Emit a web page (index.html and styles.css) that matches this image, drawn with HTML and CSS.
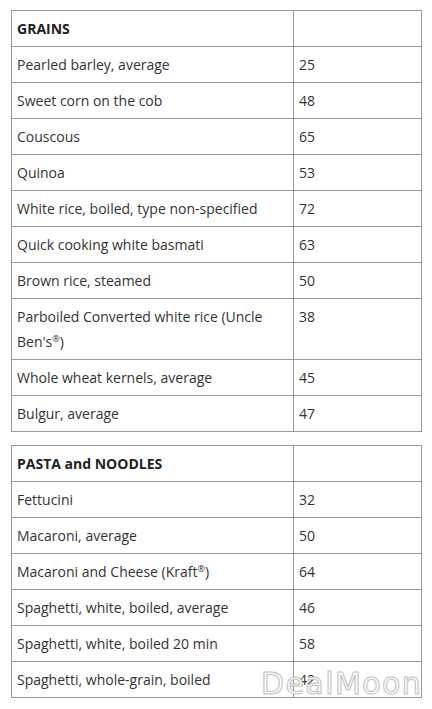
FILE: index.html
```html
<!DOCTYPE html>
<html lang="en">
<head>
    <meta charset="UTF-8">
    <meta name="viewport" content="width=device-width, initial-scale=1.0">
    <title>Glycemic Index - Grains and Pasta</title>
    <link rel="stylesheet" href="styles.css">
</head>
<body>
    <div class="page">
        <table class="gi-table">
            <tr><th>GRAINS</th><td></td></tr>
            <tr><td>Pearled barley, average</td><td>25</td></tr>
            <tr><td>Sweet corn on the cob</td><td>48</td></tr>
            <tr><td>Couscous</td><td>65</td></tr>
            <tr><td>Quinoa</td><td>53</td></tr>
            <tr><td>White rice, boiled, type non-specified</td><td>72</td></tr>
            <tr><td>Quick cooking white basmati</td><td>63</td></tr>
            <tr><td>Brown rice, steamed</td><td>50</td></tr>
            <tr><td>Parboiled Converted white rice (Uncle Ben's<sup>®</sup>)</td><td>38</td></tr>
            <tr><td>Whole wheat kernels, average</td><td>45</td></tr>
            <tr><td>Bulgur, average</td><td>47</td></tr>
        </table>

        <table class="gi-table">
            <tr><th>PASTA and NOODLES</th><td></td></tr>
            <tr><td>Fettucini</td><td>32</td></tr>
            <tr><td>Macaroni, average</td><td>50</td></tr>
            <tr><td>Macaroni and Cheese (Kraft<sup>®</sup>)</td><td>64</td></tr>
            <tr><td>Spaghetti, white, boiled, average</td><td>46</td></tr>
            <tr><td>Spaghetti, white, boiled 20 min</td><td>58</td></tr>
            <tr><td>Spaghetti, whole-grain, boiled</td><td>42</td></tr>
        </table>

        <div class="watermark">DealMoon</div>
    </div>
</body>
</html>
```

FILE: styles.css
```css
* { margin: 0; padding: 0; box-sizing: border-box; }
body { font-family: 'Open Sans', 'Liberation Sans', sans-serif; background: #fff; color: #333; }
.page { position: relative; padding: 10px 10px 0 11px; height: 709px; overflow: hidden; }
.gi-table { width: 411px; border-collapse: collapse; margin-bottom: 13px; }
.gi-table th, .gi-table td { border: 1px solid #999; padding: 5px 5px; font-size: 14px; line-height: 25px; text-align: left; vertical-align: top; height: 36px; }
.gi-table th { font-weight: 700; width: 282px; color: #222; }
.gi-table sup { font-size: 9px; line-height: 0; vertical-align: 5px; }
.watermark { position: absolute; left: 261px; top: 666px; font-family: 'DejaVu Sans', sans-serif; font-size: 30px; letter-spacing: 1.4px; color: rgba(255,255,255,0.92); -webkit-text-stroke: 1px #c4c4c4; text-shadow: 0 0 2px rgba(0,0,0,0.15); }
```
